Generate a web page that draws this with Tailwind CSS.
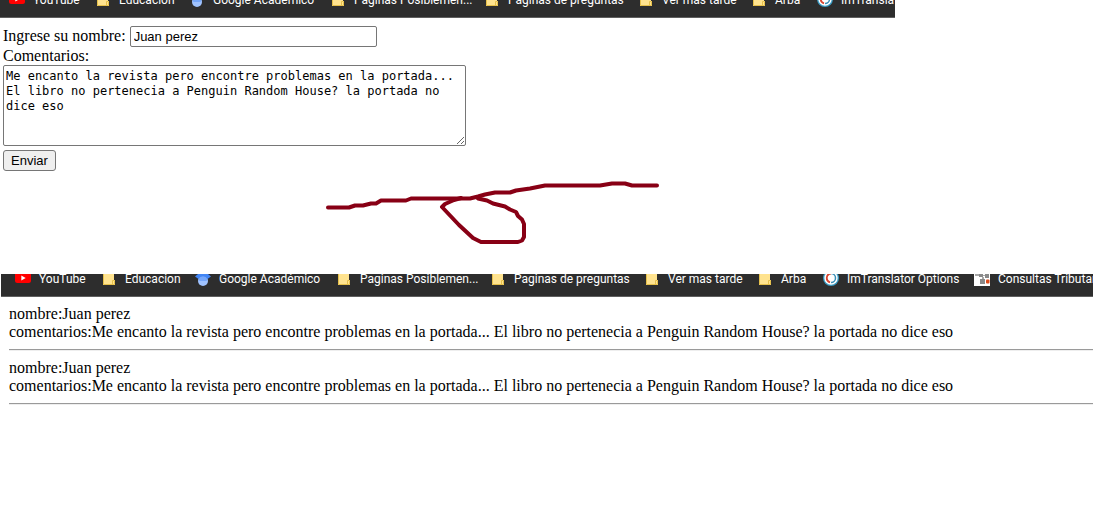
<!DOCTYPE html>
<html lang="es">
<head>
<meta charset="utf-8">
<title>Comentarios</title>
<script src="https://cdn.jsdelivr.net/npm/@tailwindcss/browser@4"></script>
</head>
<body class="bg-white text-black text-[16px] leading-[18px] font-['Liberation_Serif',serif] overflow-x-hidden">

<svg class="hidden" aria-hidden="true">
  <symbol id="youtube" viewBox="0 0 16 16"><rect y="2" width="16" height="11" rx="2.5" fill="#f00"/><path d="M6.300 5.500v5l4.400-2.500z" fill="#fff"/></symbol>
  <symbol id="folder" viewBox="0 0 16 16"><path d="M2 1h11v9h1v5H2z" fill="#ffe38f"/><path d="M2.500 1v13.500h11V10.500h-2V14" fill="none" stroke="#e6c04a"/></symbol>
  <symbol id="scholar" viewBox="0 0 16 16"><circle cx="8" cy="11" r="5" fill="#a0c3ff"/><path d="M8 0 0 6.500l3.500 2.500h9L16 6.500z" fill="#4285f4"/><path d="M3.500 9a5 5 0 0 1 9 0l-1 2h-7z" fill="#76a7fa"/></symbol>
  <symbol id="translator" viewBox="0 0 16 16"><circle cx="8" cy="8" r="8" fill="#3a9cc4"/><circle cx="8" cy="8" r="6.700" fill="#fff"/><path d="M8 3.500a4.500 4.500 0 0 0-1 8.800" fill="none" stroke="#d9442f" stroke-width="1.800"/><path d="M8 3.500a4.500 4.500 0 0 1 0 9" fill="none" stroke="#3a8fb7" stroke-width="1.500"/></symbol>
  <symbol id="consultas" viewBox="0 0 16 16"><path d="M0 0h16v16H0z" fill="#fff"/><path d="M5 3h4v4H5zM11 3h4v5h-4zM6 9h5v5H6z" fill="#8a8a8a"/><path d="M1 4h4v2H1zM9 5h2v1H9zM8 7h2v2H8z" fill="#a8a8a8"/><rect x="12" y="9.500" width="3.500" height="4" rx="1" fill="#dd4b1a"/></symbol>
</svg>

<nav aria-label="Marcadores" class="flex items-end h-[18px] w-[82%] max-w-[895px] overflow-hidden bg-[#2d2d2d] border-b border-[#5f5f5f] pl-[9px] pb-2 font-['Roboto',sans-serif] text-[12px] leading-[18px] text-white whitespace-nowrap">
  <a href="#" class="flex shrink-0 gap-2 w-[86px]"><svg class="size-4 shrink-0"><use href="#youtube"/></svg>YouTube</a>
  <a href="#" class="flex shrink-0 gap-2 w-[94px]"><svg class="size-4 shrink-0"><use href="#folder"/></svg>Educacion</a>
  <a href="#" class="flex shrink-0 gap-2 w-[141px]"><svg class="size-4 shrink-0"><use href="#scholar"/></svg>Google Académico</a>
  <a href="#" class="flex shrink-0 gap-2 w-[154px]"><svg class="size-4 shrink-0"><use href="#folder"/></svg>Paginas Posiblemen...</a>
  <a href="#" class="flex shrink-0 gap-2 w-[154px]"><svg class="size-4 shrink-0"><use href="#folder"/></svg>Paginas de preguntas</a>
  <a href="#" class="flex shrink-0 gap-2 w-[113px]"><svg class="size-4 shrink-0"><use href="#folder"/></svg>Ver mas tarde</a>
  <a href="#" class="flex shrink-0 gap-2 w-[66px]"><svg class="size-4 shrink-0"><use href="#folder"/></svg>Arba</a>
  <a href="#" class="flex shrink-0 gap-2 w-[151px]"><svg class="size-4 shrink-0"><use href="#translator"/></svg>ImTranslator Options</a>
</nav>

<form class="flex flex-col items-start pl-[3px] pt-2">
  <div class="flex items-start gap-1">
    <label for="nombre" class="leading-5">Ingrese su nombre:</label>
    <input id="nombre" type="text" value="Juan perez" class="w-[247px] h-[21px] px-[3px] border border-[#767676] rounded-[2px] bg-white font-['Liberation_Sans',sans-serif] text-[13px] leading-4">
  </div>
  <label for="comentarios">Comentarios:</label>
  <textarea id="comentarios" spellcheck="false" class="block w-[463px] h-[81px] px-[2px] pt-[3px] border border-[#767676] rounded-[2px] bg-white resize font-['DejaVu_Sans_Mono',monospace] text-[12px] leading-[15px]">Me encanto la revista pero encontre problemas en la portada... El libro no pertenecia a Penguin Random House? la portada no dice eso</textarea>
  <button type="button" class="mt-1 h-[21px] px-[7px] border border-[#767676] rounded-[3px] bg-[#efefef] font-['Liberation_Sans',sans-serif] text-[13px] leading-4">Enviar</button>
</form>

<svg class="block mt-2 mb-6 ml-[320px] w-[350px] h-[71px]" viewBox="320 179 350 71" fill="none" stroke="#880015" stroke-width="4" stroke-linecap="round" stroke-linejoin="round" role="img" aria-label="Trazo a mano">
  <path d="M328 207.500H349L355 205.500H363L371 203.500H376L381 200.500H406L411 198.500H470L478 196.500L485 194.500L495 192.500H510L516 190.500L530 188.500L545 185.500H600L612 183.500H625L632 185.500H657"/>
  <path d="M478 198.500L487 200.500L493 203.500L505 206.500L510 209.500L516 212L518 216L522 219.500L524 224V237L522 240.500L518 242H481L473 238L459 225L442 207L445 204L454 200L461 198"/>
</svg>

<nav aria-label="Marcadores" class="flex items-end h-[23px] ml-px overflow-hidden bg-[#2d2d2d] border-b border-[#5f5f5f] pl-[14px] pb-2 font-['Roboto',sans-serif] text-[12px] leading-[18px] text-white whitespace-nowrap">
  <a href="#" class="flex shrink-0 gap-2 w-[86px]"><svg class="size-4 shrink-0"><use href="#youtube"/></svg>YouTube</a>
  <a href="#" class="flex shrink-0 gap-2 w-[94px]"><svg class="size-4 shrink-0"><use href="#folder"/></svg>Educacion</a>
  <a href="#" class="flex shrink-0 gap-2 w-[141px]"><svg class="size-4 shrink-0"><use href="#scholar"/></svg>Google Académico</a>
  <a href="#" class="flex shrink-0 gap-2 w-[154px]"><svg class="size-4 shrink-0"><use href="#folder"/></svg>Paginas Posiblemen...</a>
  <a href="#" class="flex shrink-0 gap-2 w-[154px]"><svg class="size-4 shrink-0"><use href="#folder"/></svg>Paginas de preguntas</a>
  <a href="#" class="flex shrink-0 gap-2 w-[113px]"><svg class="size-4 shrink-0"><use href="#folder"/></svg>Ver mas tarde</a>
  <a href="#" class="flex shrink-0 gap-2 w-[66px]"><svg class="size-4 shrink-0"><use href="#folder"/></svg>Arba</a>
  <a href="#" class="flex shrink-0 gap-2 w-[151px]"><svg class="size-4 shrink-0"><use href="#translator"/></svg>ImTranslator Options</a>
  <a href="#" class="flex shrink-0 gap-2"><svg class="size-4 shrink-0"><use href="#consultas"/></svg>Consultas Tributarias</a>
</nav>

<main class="pl-[9px] pt-2">
  <p>nombre:Juan perez<br>comentarios:Me encanto la revista pero encontre problemas en la portada... El libro no pertenecia a Penguin Random House? la portada no dice eso</p>
  <hr class="my-2 h-[2px] border-t border-b border-t-[#9a9a9a] border-b-[#eeeeee]">
  <p>nombre:Juan perez<br>comentarios:Me encanto la revista pero encontre problemas en la portada... El libro no pertenecia a Penguin Random House? la portada no dice eso</p>
  <hr class="my-2 h-[2px] border-t border-b border-t-[#9a9a9a] border-b-[#eeeeee]">
</main>
</body>
</html>
